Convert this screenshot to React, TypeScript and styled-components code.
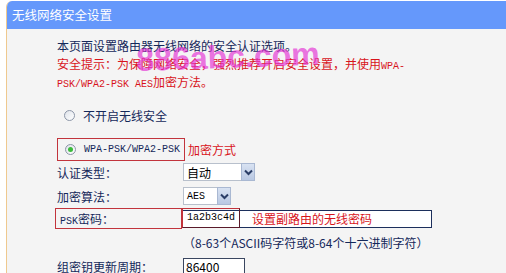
import styled, { createGlobalStyle } from 'styled-components';

const GlobalStyle = createGlobalStyle`
  html, body {
    margin: 0;
    padding: 0;
    background: #ffffff;
    overflow: hidden;
  }
  body {
    font-family: "Noto Sans CJK SC", "Noto Sans", sans-serif;
    font-size: 12px;
  }
`;

const Chevron = () => (
  <svg width="9" height="7" viewBox="0 0 9 7">
    <path d="M1 1.5 L4.5 5 L8 1.5" fill="none" stroke="#2a3d66" strokeWidth="2" />
  </svg>
);

const Radio = ({ checked }: { checked?: boolean }) => (
  <RadioCircle>{checked && <RadioDot />}</RadioCircle>
);

export default function App() {
  return (
    <>
      <GlobalStyle />
      <Page>
        <Panel>
          <TitleBar>无线网络安全设置</TitleBar>
          <Body>
            <Line>本页面设置路由器无线网络的安全认证选项。</Line>
            <Line $red>安全提示：为保障网络安全，强烈推荐开启安全设置，并使用<Mono>WPA-</Mono></Line>
            <Line $red><Mono>PSK/WPA2-PSK AES</Mono>加密方法。</Line>

            <RadioRow>
              <Radio />
              <span>不开启无线安全</span>
            </RadioRow>

            <HighlightRow>
              <RadioBox>
                <Radio checked />
                <Mono>WPA-PSK/WPA2-PSK</Mono>
              </RadioBox>
              <Note>加密方式</Note>
            </HighlightRow>

            <FieldRow $top={2}>
              <Label>认证类型：</Label>
              <Select>
                <SelectValue $width={58}>自动</SelectValue>
                <ArrowButton><Chevron /></ArrowButton>
              </Select>
            </FieldRow>

            <FieldRow $top={6}>
              <Label>加密算法：</Label>
              <Select>
                <SelectValue $width={34}><Mono>AES</Mono></SelectValue>
                <ArrowButton><Chevron /></ArrowButton>
              </Select>
            </FieldRow>

            <PskRow>
              <PskLabel>
                <Mono>PSK</Mono>密码：
              </PskLabel>
              <PskInput>
                <PskValue><Mono>1a2b3c4d</Mono></PskValue>
                <Note>设置副路由的无线密码</Note>
              </PskInput>
            </PskRow>

            <Hint>（8-63个ASCII码字符或8-64个十六进制字符）</Hint>

            <FieldRow $top={5}>
              <Label>组密钥更新周期：</Label>
              <TextBox>86400</TextBox>
            </FieldRow>
          </Body>
        </Panel>
        <Watermark>886abc.com</Watermark>
      </Page>
    </>
  );
}

const Page = styled.div`
  position: relative;
  width: 506px;
  height: 273px;
  overflow: hidden;
  padding: 1px 0 0 6px;
  box-sizing: border-box;
`;

const Panel = styled.div`
  width: 520px;
  height: 300px;
  background: #f4f4f4;
  border-left: 1px solid #efc98f;
  border-top-left-radius: 6px;
  overflow: hidden;
`;

const TitleBar = styled.div`
  height: 28px;
  background: #6598fb;
  color: #ffffff;
  font-size: 12.5px;
  line-height: 28px;
  padding-left: 6px;
  margin-left: -1px;
`;

const Body = styled.div`
  padding: 8px 0 0 50px;
  display: flex;
  flex-direction: column;
  color: #14285a;
`;

const Line = styled.div<{ $red?: boolean }>`
  height: 18px;
  line-height: 18px;
  white-space: nowrap;
  color: ${(p) => (p.$red ? '#d8141c' : '#14285a')};
`;

const Mono = styled.span`
  font-family: "Liberation Mono", "DejaVu Sans Mono", monospace;
  font-size: 10px;
  white-space: nowrap;
`;

const RadioRow = styled.div`
  display: flex;
  align-items: center;
  gap: 8px;
  height: 18px;
  margin-top: 15px;
  padding-left: 7px;
`;

const RadioCircle = styled.span`
  width: 11px;
  height: 11px;
  border-radius: 50%;
  border: 1px solid #8c96a8;
  background: linear-gradient(135deg, #dfe3ea, #ffffff);
  box-sizing: border-box;
  display: flex;
  align-items: center;
  justify-content: center;
  flex: none;
`;

const RadioDot = styled.span`
  width: 5px;
  height: 5px;
  border-radius: 50%;
  background: #3bbb3b;
`;

const HighlightRow = styled.div`
  display: flex;
  align-items: center;
  height: 23px;
  margin-top: 14px;
`;

const RadioBox = styled.div`
  display: flex;
  align-items: center;
  gap: 8px;
  height: 23px;
  width: 128px;
  box-sizing: border-box;
  padding-left: 7px;
  border: 1px solid #c2343c;
`;

const Note = styled.span`
  color: #d8141c;
  margin-left: 3px;
  white-space: nowrap;
`;

const FieldRow = styled.div<{ $top: number }>`
  display: flex;
  align-items: center;
  height: 18px;
  margin-top: ${(p) => p.$top}px;
`;

const Label = styled.div`
  width: 126px;
  flex: none;
  white-space: nowrap;
`;

const Select = styled.div`
  display: flex;
  height: 18px;
`;

const SelectValue = styled.div<{ $width: number }>`
  display: flex;
  align-items: center;
  width: ${(p) => p.$width}px;
  padding-left: 3px;
  background: #ffffff;
  border: 1px solid #b8c0cc;
  border-right: none;
  color: #000000;
  box-sizing: border-box;
`;

const ArrowButton = styled.div`
  width: 14px;
  height: 18px;
  box-sizing: border-box;
  border: 1px solid #a9b8d2;
  background: linear-gradient(#d8e2f2, #b9c8e2);
  display: flex;
  align-items: center;
  justify-content: center;
`;

const PskRow = styled.div`
  display: flex;
  align-items: center;
  height: 21px;
  margin-top: 3px;
  margin-left: -2px;
`;

const PskLabel = styled.div`
  width: 127px;
  height: 21px;
  box-sizing: border-box;
  border: 1px solid #c2343c;
  padding-left: 4px;
  line-height: 19px;
  flex: none;
  white-space: nowrap;
`;

const PskInput = styled.div`
  display: flex;
  align-items: center;
  width: 250px;
  height: 18px;
  box-sizing: border-box;
  border: 1px solid #1c2f5c;
  background: #ffffff;
`;

const PskValue = styled.div`
  width: 58px;
  height: 20px;
  margin: -2px 9px 0 -1px;
  box-sizing: border-box;
  border: 1px solid #5a1a2a;
  border-left-color: #c2343c;
  border-top-color: #c2343c;
  display: flex;
  align-items: center;
  padding-left: 4px;
  color: #000000;
`;

const Hint = styled.div`
  height: 18px;
  line-height: 18px;
  margin-top: 5px;
  padding-left: 126px;
  white-space: nowrap;
`;

const TextBox = styled.div`
  width: 62px;
  height: 17px;
  box-sizing: border-box;
  border: 1px solid #3a4660;
  background: #ffffff;
  color: #000000;
  padding-left: 2px;
  line-height: 15px;
`;

const Watermark = styled.div`
  position: absolute;
  left: 137px;
  top: 44px;
  font-family: "Liberation Sans", Arial, sans-serif;
  font-size: 32px;
  font-weight: bold;
  line-height: 1;
  color: rgba(228, 50, 212, 0.68);
  transform: rotate(-2deg);
  transform-origin: left bottom;
  pointer-events: none;
`;
